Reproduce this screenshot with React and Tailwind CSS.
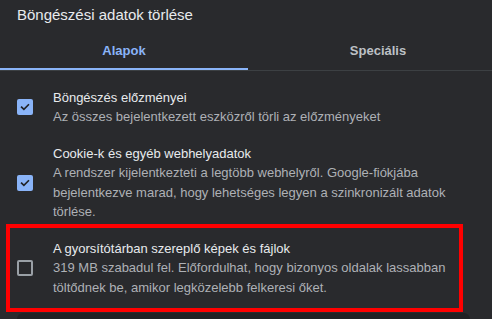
const items = [
  {
    checked: true,
    title: "Böngészés előzményei",
    text: "Az összes bejelentkezett eszközről törli az előzményeket",
  },
  {
    checked: true,
    title: "Cookie-k és egyéb webhelyadatok",
    text: "A rendszer kijelentkezteti a legtöbb webhelyről. Google-fiókjába bejelentkezve marad, hogy lehetséges legyen a szinkronizált adatok törlése.",
  },
  {
    checked: false,
    title: "A gyorsítótárban szereplő képek és fájlok",
    text: "319 MB szabadul fel. Előfordulhat, hogy bizonyos oldalak lassabban töltődnek be, amikor legközelebb felkeresi őket.",
  },
];

const Checkbox = ({ checked }) =>
  checked ? (
    <div className="w-4 h-4 shrink-0 rounded-[2px] bg-[#8ab4f8] flex items-center justify-center">
      <svg width="12" height="12" viewBox="0 0 12 12" fill="none">
        <path d="M2.6 6.2 L4.9 8.4 L9.4 3.8" stroke="#202124" strokeWidth="1.6" strokeLinecap="square" />
      </svg>
    </div>
  ) : (
    <div className="w-4 h-4 shrink-0 rounded-[2px] border-2 border-[#9aa0a6]" />
  );

const App = () => {
  return (
    <div
      className="relative w-[492px] h-[319px] overflow-hidden bg-[#292a2d] text-[#e8eaed]"
      style={{ fontFamily: '"Liberation Sans", Arial, sans-serif' }}
    >
      {/*title*/}
      <div className="pl-[17px] pt-[5px] text-[15px] leading-[20px]">Böngészési adatok törlése</div>

      {/*tabs*/}
      <div className="flex w-[508px] border-b border-[#3c4043]">
        <div className="w-[248px] h-[45px] pt-[16px] border-b-2 border-[#8ab4f8] text-center text-[13px] leading-[19.5px] font-bold text-[#8ab4f8]">
          Alapok
        </div>
        <div className="flex-1 h-[45px] pt-[16px] text-center text-[13px] leading-[19.5px] font-bold text-[#bdc1c6]">
          Speciális
        </div>
      </div>

      {/*options*/}
      <div className="pt-[8px]">
        {items.map((item, idx) => (
          <div key={idx} className="flex items-center gap-5 pl-[17px] py-[8.5px]">
            <Checkbox checked={item.checked} />
            <div className="w-[400px] text-[13px] leading-[19.5px]">
              <div className="text-[#e8eaed]">{item.title}</div>
              <div className="text-[#aeb1b6]">{item.text}</div>
            </div>
          </div>
        ))}
      </div>

      {/*bottom card*/}
      <div className="ml-[17px] mt-[7px] w-[453px] h-6 rounded-t-md bg-[#202124]" />

      {/*highlight*/}
      <div className="absolute left-[6px] top-[224px] w-[457px] h-[88px] border-4 border-[#ff0000]" />
    </div>
  );
};

export default App;
